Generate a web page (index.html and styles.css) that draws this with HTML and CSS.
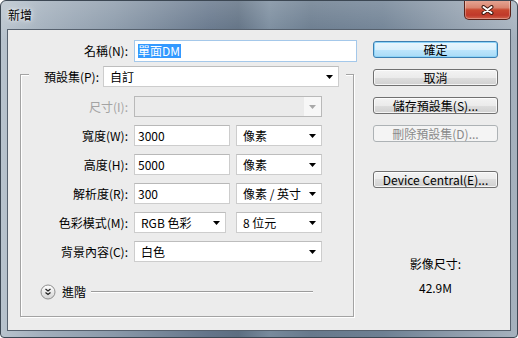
FILE: index.html
```html
<!DOCTYPE html>
<html lang="zh-Hant">
<head>
  <meta charset="UTF-8">
  <title>新增</title>
  <link rel="stylesheet" href="styles.css">
</head>
<body>
  <div class="window">
    <div class="titlebar">
      <span class="title">新增</span>
      <div class="close-btn">
        <svg width="13" height="10" viewBox="0 0 13 10">
          <path d="M2.5 2l8 6M10.5 2l-8 6" stroke="#3e1a12" stroke-width="4" stroke-linecap="round"/>
          <path d="M2.5 2l8 6M10.5 2l-8 6" stroke="#fff" stroke-width="2" stroke-linecap="round"/>
        </svg>
      </div>
    </div>

    <div class="client">
      <div class="form">
        <div class="name-row">
          <label class="lbl name-lbl">名稱(N):</label>
          <div class="field name-field"><span class="selected">單面DM</span></div>
        </div>

        <div class="group">
          <div class="group-head">
            <label class="head-lbl">預設集(P):</label>
            <div class="dropdown preset"><span>自訂</span><span class="arrow"><svg width="7" height="4"><path d="M0 0H7L3.5 4z"/></svg></span></div>
          </div>

          <div class="rows">
            <label class="lbl disabled">尺寸(I):</label>
            <div class="dropdown disabled"><span></span><span class="arrow"><svg width="7" height="4"><path d="M0 0H7L3.5 4z"/></svg></span></div>

            <label class="lbl">寬度(W):</label>
            <div class="pair">
              <div class="field num">3000</div>
              <div class="dropdown unit"><span>像素</span><span class="arrow"><svg width="7" height="4"><path d="M0 0H7L3.5 4z"/></svg></span></div>
            </div>

            <label class="lbl">高度(H):</label>
            <div class="pair">
              <div class="field num">5000</div>
              <div class="dropdown unit"><span>像素</span><span class="arrow"><svg width="7" height="4"><path d="M0 0H7L3.5 4z"/></svg></span></div>
            </div>

            <label class="lbl">解析度(R):</label>
            <div class="pair">
              <div class="field num">300</div>
              <div class="dropdown unit"><span>像素 / 英寸</span><span class="arrow"><svg width="7" height="4"><path d="M0 0H7L3.5 4z"/></svg></span></div>
            </div>

            <label class="lbl">色彩模式(M):</label>
            <div class="pair color-pair">
              <div class="dropdown mode"><span>RGB 色彩</span><span class="arrow"><svg width="7" height="4"><path d="M0 0H7L3.5 4z"/></svg></span></div>
              <div class="dropdown unit"><span>8 位元</span><span class="arrow"><svg width="7" height="4"><path d="M0 0H7L3.5 4z"/></svg></span></div>
            </div>

            <label class="lbl">背景內容(C):</label>
            <div class="dropdown"><span>白色</span><span class="arrow"><svg width="7" height="4"><path d="M0 0H7L3.5 4z"/></svg></span></div>
          </div>

          <div class="advanced">
            <svg width="16" height="16" viewBox="0 0 16 16">
              <defs>
                <linearGradient id="adv" x1="0" y1="0" x2="0" y2="1">
                  <stop offset="0" stop-color="#ffffff"/>
                  <stop offset="1" stop-color="#d4d4d4"/>
                </linearGradient>
              </defs>
              <circle cx="8" cy="8" r="7" fill="url(#adv)" stroke="#8e8e8e"/>
              <path d="M5.5 5l2.5 2 2.5-2M5.5 8.5l2.5 2 2.5-2" fill="none" stroke="#222" stroke-width="1.3"/>
            </svg>
            <span class="adv-text">進階</span>
            <span class="etched"></span>
          </div>
        </div>
      </div>

      <div class="side">
        <div class="btn default">確定</div>
        <div class="btn">取消</div>
        <div class="btn">儲存預設集(S)...</div>
        <div class="btn disabled">刪除預設集(D)...</div>
        <div class="btn device">Device Central(E)...</div>
        <div class="info">
          <div>影像尺寸:</div>
          <div class="info-value">42.9M</div>
        </div>
      </div>
    </div>
  </div>
</body>
</html>
```

FILE: styles.css
```css
body {
  margin: 0;
  background: #fff;
  font-family: "Noto Sans CJK TC", "Noto Sans", sans-serif;
  font-size: 12px;
  color: #000;
}
.window {
  width: 518px;
  height: 338px;
  box-sizing: border-box;
  border: 1px solid #3c4753;
  border-radius: 6px 6px 4px 4px;
  background:
    linear-gradient(rgba(255,255,255,0.18), rgba(255,255,255,0) 40px),
    linear-gradient(to right, #b8c3cd 0%, #a2afbc 8%, #8a99a9 22%, #64758a 40%, #5d6e81 46%, #788a9c 52%, #67798c 60%, #6e8093 74%, #8e9cab 88%, #a6b2be 100%);
  display: flex;
  flex-direction: column;
  overflow: hidden;
}
.titlebar {
  height: 28px;
  flex-shrink: 0;
  display: flex;
  justify-content: space-between;
  align-items: flex-start;
}
.title {
  padding: 6px 0 0 7px;
  line-height: 16px;
  text-shadow: 0 0 6px rgba(255,255,255,0.9), 0 0 3px rgba(255,255,255,0.7);
}
.close-btn {
  width: 47px;
  height: 20px;
  margin: -1px 6px 0 0;
  box-sizing: border-box;
  border: 1px solid #5a2219;
  border-top: none;
  border-radius: 0 0 5px 5px;
  background: linear-gradient(#e6a897 0%, #d98570 40%, #c8472f 52%, #c0392a 80%, #d0634c 100%);
  box-shadow: inset 0 0 0 1px rgba(255,255,255,0.3);
  display: flex;
  align-items: center;
  justify-content: center;
}
.client {
  margin: 0 6px;
  height: 302px;
  box-sizing: border-box;
  border: 1px solid #56616e;
  background: #ececec;
  display: flex;
}
.form {
  width: 365px;
  padding-left: 12px;
  box-sizing: border-box;
}
.lbl {
  text-align: right;
  line-height: 16px;
  white-space: nowrap;
}
.lbl.disabled {
  color: #a3a3a3;
}
.name-row {
  display: flex;
  align-items: center;
  gap: 6px;
  height: 22px;
  margin-top: 10px;
}
.name-lbl {
  width: 108px;
}
.field {
  height: 21px;
  box-sizing: border-box;
  border: 1px solid #cdcdcd;
  border-top-color: #b8b8b8;
  background: #fff;
  padding: 0 3px;
  line-height: 19px;
}
.name-field {
  width: 223px;
  height: 22px;
  border-color: #a4c8ea;
  display: flex;
  align-items: center;
}
.selected {
  background: #3399ff;
  color: #fff;
  line-height: 14px;
  padding: 0 1px 0 0;
}
.group {
  width: 334px;
  margin-top: 12px;
  box-sizing: border-box;
  border: 1px solid #a3a3a3;
  box-shadow: inset 1px 1px 0 #fff, 1px 1px 0 #fff;
  padding-bottom: 17px;
}
.group-head {
  display: flex;
  align-items: center;
  gap: 4px;
  width: 317px;
  margin: -9px 0 0 8px;
  padding-right: 7px;
  box-sizing: border-box;
  background: #ececec;
}
.head-lbl {
  width: 70px;
  text-align: right;
  white-space: nowrap;
}
.dropdown {
  height: 21px;
  box-sizing: border-box;
  border: 1px solid #cdcdcd;
  border-top-color: #bdbdbd;
  background: #fff;
  display: flex;
  align-items: center;
  padding-left: 6px;
  line-height: 19px;
  white-space: nowrap;
}
.dropdown .arrow {
  margin-left: auto;
  width: 17px;
  height: 100%;
  display: flex;
  align-items: center;
  justify-content: center;
}
.dropdown.disabled {
  background: #ebebeb;
  border-color: #b9b9b9;
}
.dropdown.disabled .arrow {
  background: #f7f7f7;
}
.dropdown.disabled svg {
  fill: #a8a8a8;
}
.preset {
  width: 236px;
}
.rows {
  display: grid;
  grid-template-columns: 107px 188px;
  column-gap: 6px;
  row-gap: 8px;
  align-items: center;
  margin-top: 9px;
}
.pair {
  display: flex;
  gap: 6px;
}
.num {
  width: 96px;
}
.unit {
  width: 86px;
}
.color-pair {
  gap: 10px;
}
.mode {
  width: 92px;
}
.advanced {
  display: flex;
  align-items: center;
  height: 15px;
  margin: 22px 0 0 19px;
}
.adv-text {
  margin-left: 6px;
  line-height: 16px;
}
.etched {
  width: 222px;
  height: 1px;
  margin-left: 5px;
  background: #9c9c9c;
  box-shadow: 0 1px 0 #fff;
}
.side {
  width: 125px;
  padding-top: 11px;
  display: flex;
  flex-direction: column;
  gap: 11px;
}
.btn {
  height: 17px;
  box-sizing: border-box;
  border: 1px solid #707070;
  border-radius: 3px;
  background: linear-gradient(#f3f3f3 0%, #ebebeb 50%, #dedede 50%, #d0d0d0 100%);
  box-shadow: inset 0 0 0 1px rgba(255,255,255,0.75);
  text-align: center;
  line-height: 15px;
  white-space: nowrap;
}
.btn.default {
  border-color: #3c7fb1;
  background: linear-gradient(#eaf6fd 0%, #d9f0fc 50%, #bee6fd 50%, #a9dbf6 100%);
  box-shadow: inset 0 0 0 1px #8ed4f8;
}
.btn.disabled {
  border-color: #adb2b5;
  background: #f4f4f4;
  box-shadow: none;
  color: #8a8a8a;
}
.btn.device {
  margin-top: 18px;
}
.info {
  margin-top: 57px;
  text-align: center;
  line-height: 16px;
}
.info-value {
  margin-top: 8px;
}
```
